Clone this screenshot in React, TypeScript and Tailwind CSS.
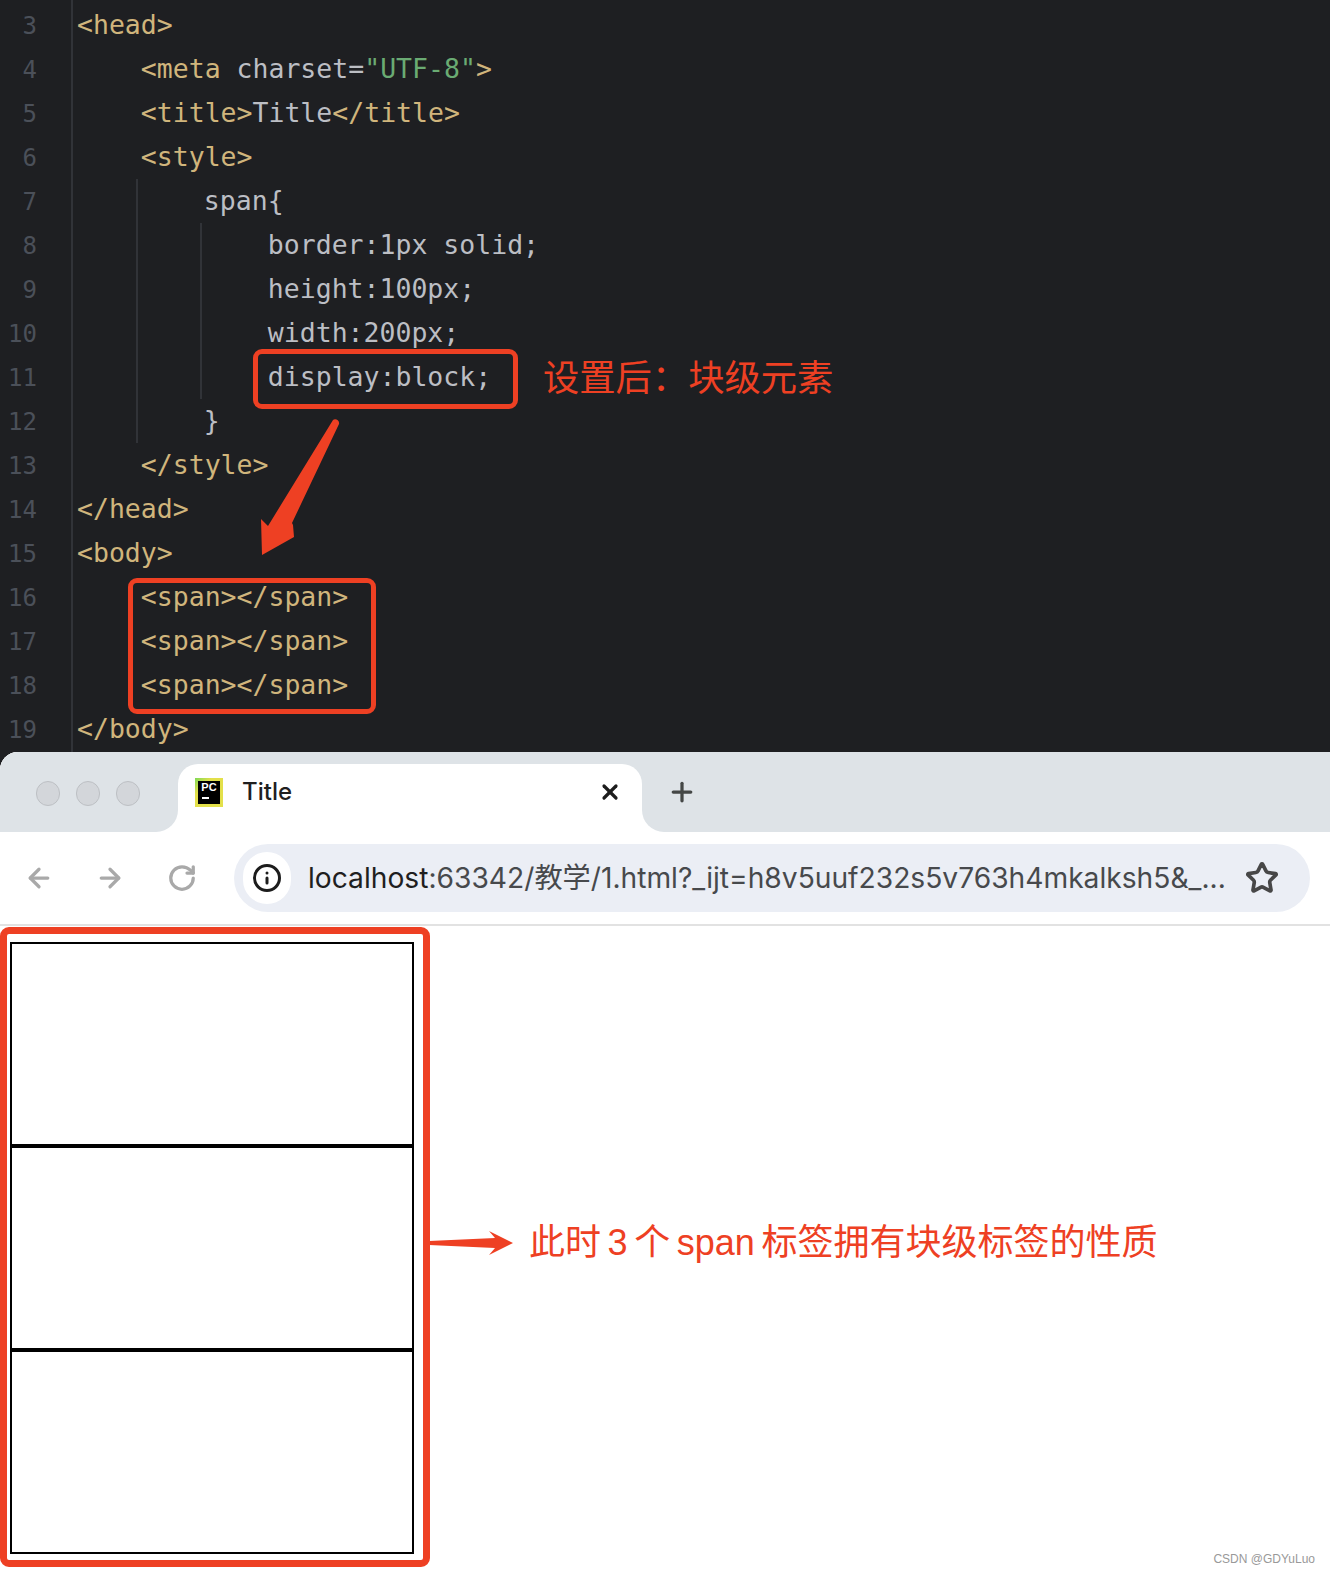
import { ArrowLeft, ArrowRight, Info, Plus, RotateCw, Star, X } from 'lucide-react'
import type { ReactNode } from 'react'

const Tag = ({ children }: { children: ReactNode }) => <span className="text-[#d0b57c]">{children}</span>
const Plain = ({ children }: { children: ReactNode }) => <span className="text-[#bcbec4]">{children}</span>

const Line = ({ children }: { children: ReactNode }) => (
  <div className="h-[44px] leading-[44px] whitespace-pre">{children}</div>
)

const lineNumbers = [3, 4, 5, 6, 7, 8, 9, 10, 11, 12, 13, 14, 15, 16, 17, 18, 19]

const CodePanel = () => (
  <div className="relative h-[752px] bg-[#1e1f22] flex font-['DejaVu_Sans_Mono',monospace] text-[26.5px]">
    <div className="w-[71px] shrink-0 pt-[4px] pr-[34px] text-right text-[24px] text-[#4b5059]">
      {lineNumbers.map((n) => (
        <div key={n} className="h-[44px] leading-[44px]">{n}</div>
      ))}
    </div>
    <div className="flex-1 border-l-2 border-[#313338] pl-[4px] pt-[3px]">
      <Line><Tag>&lt;head&gt;</Tag></Line>
      <Line><Tag>{'    <meta '}</Tag><Plain>charset</Plain><Plain>=</Plain><span className="text-[#6aab73]">"UTF-8"</span><Tag>&gt;</Tag></Line>
      <Line><Tag>{'    <title>'}</Tag><Plain>Title</Plain><Tag>&lt;/title&gt;</Tag></Line>
      <Line><Tag>{'    <style>'}</Tag></Line>
      <div className="ml-[59px] border-l-2 border-[#313338] pl-[2px]">
        <Line><Plain>{'    span{'}</Plain></Line>
        <div className="ml-[60px] border-l-2 border-[#313338] pl-[2px]">
          <Line><Plain>{'    border:1px solid;'}</Plain></Line>
          <Line><Plain>{'    height:100px;'}</Plain></Line>
          <Line><Plain>{'    width:200px;'}</Plain></Line>
          <Line><Plain>{'    display:block;'}</Plain></Line>
        </div>
        <Line><Plain>{'    }'}</Plain></Line>
      </div>
      <Line><Tag>{'    </style>'}</Tag></Line>
      <Line><Tag>&lt;/head&gt;</Tag></Line>
      <Line><Tag>&lt;body&gt;</Tag></Line>
      <Line><Tag>{'    <span></span>'}</Tag></Line>
      <Line><Tag>{'    <span></span>'}</Tag></Line>
      <Line><Tag>{'    <span></span>'}</Tag></Line>
      <Line><Tag>&lt;/body&gt;</Tag></Line>
    </div>

    {/* annotations */}
    <div className="absolute left-[253px] top-[349px] w-[265px] h-[60px] border-[5px] border-[#ee4023] rounded-[9px]" />
    <div className="absolute left-[128px] top-[578px] w-[248px] h-[136px] border-[5px] border-[#ee4023] rounded-[9px]" />
    <div className="absolute left-[543px] top-[350px] text-[36.3px] leading-[50px] text-[#ee4023] font-['Noto_Sans_CJK_SC',sans-serif] whitespace-nowrap">
      设置后：块级元素
    </div>
    <svg className="absolute left-[255px] top-[415px]" width="90" height="145" viewBox="0 0 90 145">
      <path d="M78 5 C80 3 85 5 84 9 L37 108 L38 110 L39 122 L7 140 L6 104 L13 111 Z" fill="#ee4023" />
    </svg>
  </div>
)

const Toolbar = () => (
  <div className="h-[94px] bg-white flex items-center pl-[24px] pr-[20px] border-b-2 border-[#e2e2e2]">
    <ArrowLeft className="w-[30px] h-[30px] text-[#a9a9a9] shrink-0" strokeWidth={2.6} />
    <ArrowRight className="w-[30px] h-[30px] ml-[41px] text-[#a9a9a9] shrink-0" strokeWidth={2.6} />
    <RotateCw className="w-[30px] h-[30px] ml-[42px] text-[#a9a9a9] shrink-0" strokeWidth={2.6} />
    <div className="ml-[37px] flex-1 h-[68px] rounded-full bg-[#ebeef5] flex items-center pl-[9px] min-w-0">
      <div className="w-[48px] h-[52px] rounded-full bg-white flex items-center justify-center shrink-0">
        <Info className="w-[30px] h-[30px] text-[#1c1c1c]" strokeWidth={2.4} />
      </div>
      <div className="ml-[17px] text-[28.2px] leading-none text-[#47494c] whitespace-nowrap font-['Inter','Noto_Sans_CJK_SC',sans-serif]">
        <span className="text-[#1f1f1f]">localhost</span>:63342/教学/1.html?_ijt=h8v5uuf232s5v763h4mkalksh5&amp;_...
      </div>
      <Star className="ml-auto mr-[31px] w-[34px] h-[34px] text-[#474747] shrink-0" strokeWidth={2.6} strokeLinejoin="miter" />
    </div>
  </div>
)

const TabStrip = () => (
  <div className="h-[80px] bg-white flex">
    <div className="w-[178px] bg-[#dee3e7] rounded-br-[22px] flex items-center gap-[16px] pl-[36px] pt-[2px]">
      {[0, 1, 2].map((i) => (
        <span key={i} className="w-[24px] h-[25px] rounded-full bg-[#d3d6da] border border-[#bdc0c4]" />
      ))}
    </div>
    <div className="w-[464px] bg-[#dee3e7] pt-[12px]">
      <div className="h-[68px] bg-white rounded-t-[20px] flex items-center pl-[17px] pr-[20px] pb-[12px]">
        <div className="w-[28px] h-[29px] p-[3px] bg-[linear-gradient(135deg,#7ed957,#e3e04a_30%)] shrink-0">
          <div className="w-full h-full bg-black flex flex-col items-center">
            <span className="text-[11px] leading-[13px] font-bold text-white font-['Liberation_Sans',sans-serif]">PC</span>
            <span className="mt-[3px] mr-[8px] w-[7px] h-[2px] bg-white" />
          </div>
        </div>
        <span className="ml-[19px] text-[24px] font-medium text-[#1f1f1f] font-['Inter',sans-serif]">Title</span>
        <X className="ml-auto w-[24px] h-[24px] text-[#1c1c1c]" strokeWidth={3.2} />
      </div>
    </div>
    <div className="flex-1 bg-[#dee3e7] rounded-bl-[22px] flex items-center pl-[25px]">
      <Plus className="w-[30px] h-[30px] text-[#444746]" strokeWidth={2.6} />
    </div>
  </div>
)

const SpanBox = () => <div className="h-[204px] border-2 border-black" />

const PageContent = () => (
  <div className="relative flex h-[646px] bg-white pt-[1px]">
    <div className="w-[430px] h-[640px] shrink-0 border-[7px] border-[#ee4023] rounded-[9px] pl-[3px] pt-[8px]">
      <div className="w-[404px]">
        <SpanBox />
        <SpanBox />
        <SpanBox />
      </div>
    </div>
    <div className="flex items-center h-[632px] font-['Liberation_Sans','Noto_Sans_CJK_SC',sans-serif]">
      <svg width="84" height="26" viewBox="0 0 84 26" className="-ml-[1px] shrink-0">
        <path d="M0 11 L66 8 L60 1 L84 13 L60 25 L66 18 L0 15 Z" fill="#ee4023" />
      </svg>
      <span className="ml-[16px] text-[36px] text-[#ee4023] whitespace-nowrap [word-spacing:-3.4px]">此时 3 个 span 标签拥有块级标签的性质</span>
    </div>
    <span className="absolute right-[15px] bottom-[4px] text-[12px] text-[#999999] font-['Liberation_Sans',sans-serif]">
      CSDN @GDYuLuo
    </span>
  </div>
)

export default function App() {
  return (
    <div className="w-[1330px] h-[1572px] overflow-hidden bg-[#1e1f22]">
      <CodePanel />
      <div className="rounded-tl-[18px] overflow-hidden bg-white relative">
        <TabStrip />
        <Toolbar />
        <PageContent />
      </div>
    </div>
  )
}
